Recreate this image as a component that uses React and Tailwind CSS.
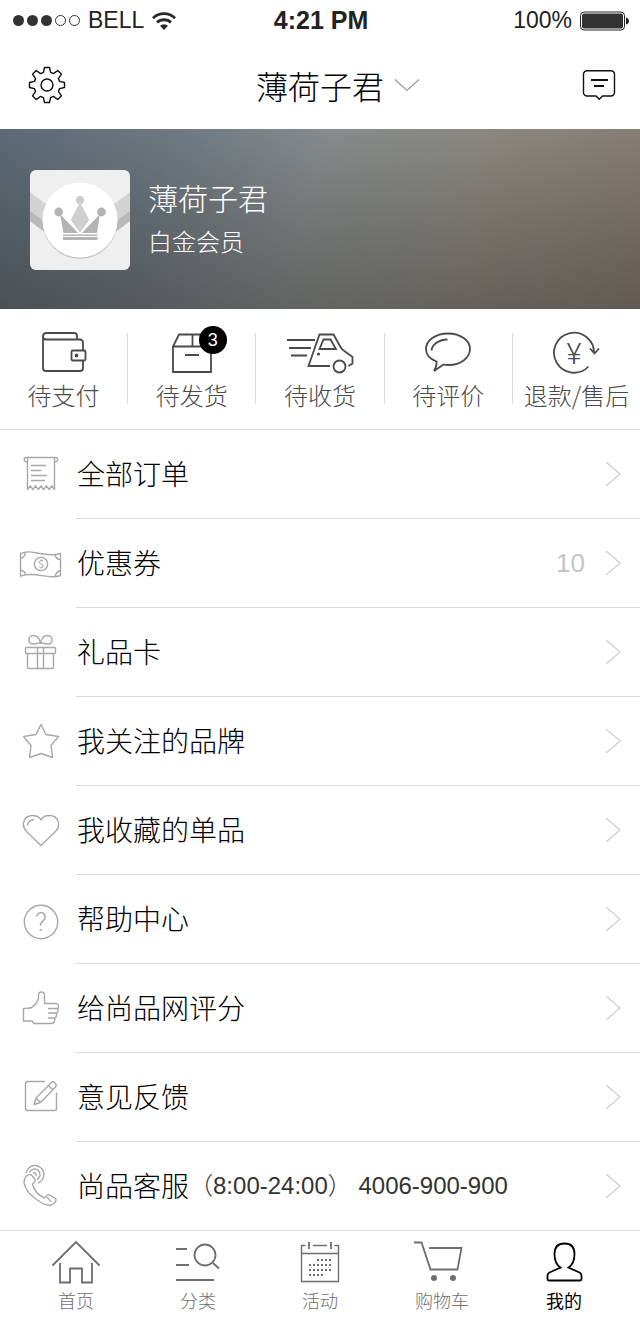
import { useState } from "react";

function StatusBar() {
  return (
    <div className="grid h-[41px] grid-cols-[1fr_auto_1fr] items-center pl-[13px] pr-[11px] font-['Liberation_Sans',sans-serif] text-[23px] text-[#222]">
      <div className="flex items-center">
        <div className="flex gap-[3px]">
          <span className="size-[11px] rounded-full bg-[#333]" />
          <span className="size-[11px] rounded-full bg-[#333]" />
          <span className="size-[11px] rounded-full bg-[#333]" />
          <span className="size-[11px] rounded-full border border-[#333]" />
          <span className="size-[11px] rounded-full border border-[#333]" />
        </div>
        <span className="ml-2">BELL</span>
        <svg viewBox="0 0 24 18" className="ml-2 h-[18px] w-6" fill="none" stroke="#2b2b2b" strokeWidth="2.8">
          <path d="M1 6.2A15.6 15.6 0 0 1 23 6.2" />
          <path d="M5 10.6a10 10 0 0 1 14 0" />
          <path d="M12 18l-4-4.2a6 6 0 0 1 8 0z" fill="#2b2b2b" stroke="none" />
        </svg>
      </div>
      <span className="text-[25px] font-bold">4:21 PM</span>
      <div className="flex items-center justify-end gap-2">
        <span>100%</span>
        <svg viewBox="0 0 49 20" className="h-5 w-[49px]">
          <rect x="0.5" y="1" width="44" height="18" rx="3.5" fill="none" stroke="#222" />
          <rect x="2" y="2.5" width="41" height="15" rx="2" fill="#333" />
          <path d="M46 6.5c4 1 4 6 0 7z" fill="#222" />
        </svg>
      </div>
    </div>
  );
}

function Header({ name }) {
  return (
    <header className="grid h-22 grid-cols-[1fr_auto_1fr] items-center px-6">
      <button aria-label="设置" className="ml-1 justify-self-start">
        <svg viewBox="-19 -19 38 38" className="size-[38px]" fill="none" stroke="#111" strokeWidth="1.4" strokeLinejoin="round">
          <path d="M-3.6-12.6-2.5-17.5H2.5L3.6-12.6 6.4-11.4 10.8-14.5 14.5-10.8 11.4-6.4 12.6-3.6 17.5-2.5V2.5L12.6 3.6 11.4 6.4 14.5 10.8 10.8 14.5 6.4 11.4 3.6 12.6 2.5 17.5H-2.5L-3.6 12.6-6.4 11.4-10.8 14.5-14.5 10.8-11.4 6.4-12.6 3.6-17.5 2.5V-2.5L-12.6-3.6-11.4-6.4-14.5-10.8-10.8-14.5-6.4-11.4Z" />
          <circle r="6" />
        </svg>
      </button>
      <button className="flex items-center gap-[10px] pl-9 text-[32px] leading-10 text-black">
        {name}
        <svg viewBox="0 0 26 14" className="h-[14px] w-[26px]" fill="none" stroke="#999" strokeWidth="1.2">
          <path d="M1 1.5l12 11 12-11" />
        </svg>
      </button>
      <button aria-label="消息" className="justify-self-end">
        <svg viewBox="0 0 34 32" className="h-8 w-[34px]" fill="none" stroke="#111" strokeWidth="1.4">
          <path d="M5 1.7h24a3.5 3.5 0 0 1 3.5 3.5v18.3A3.5 3.5 0 0 1 29 27h-8.5L17.3 30.3 14 27H5a3.5 3.5 0 0 1-3.5-3.5V5.2A3.5 3.5 0 0 1 5 1.7z" />
          <path d="M9 11h17M12 17h10" strokeWidth="1.8" />
        </svg>
      </button>
    </header>
  );
}

function Avatar() {
  return (
    <svg viewBox="0 0 100 100" className="size-[100px] rounded-md bg-[#efefef]">
      <path d="M0 22l17 13v18L0 41zM100 22L83 35v18l17-12z" fill="#d2d2d2" />
      <path d="M0 41l17 12v11L0 51zM100 41L83 53v11l17-13z" fill="#b9b9b9" />
      <circle cx="50" cy="51.5" r="37.3" fill="#c4c4c4" />
      <circle cx="50" cy="50" r="37.5" fill="#fff" />
      <circle cx="50" cy="30" r="4.2" fill="#cdcdcd" />
      <path d="M50 32l9.3 18L50 62.5 40.7 50z" fill="#d0d0d0" />
      <g fill="#b4b4b4">
        <circle cx="28.7" cy="42" r="4.4" />
        <circle cx="71.5" cy="42" r="4.4" />
        <path d="M30 44l18 19H33.5zM70 44L52 63h15z" />
        <path d="M33 64.5h34.5V66H33zM33 67h34.5v3H33z" />
      </g>
    </svg>
  );
}

function Profile({ name, level }) {
  return (
    <section className="flex h-45 bg-[linear-gradient(to_bottom,rgba(40,36,30,0)_0%,rgba(40,36,30,0.2)_50%,rgba(40,36,30,0.38)_100%),linear-gradient(100deg,#5c6a76_0%,#6d7882_25%,#858b8c_48%,#8a8880_72%,#857b74_100%)] pt-[41px] pl-[30px]">
      <Avatar />
      <div className="ml-[18px] pt-[7px] text-white">
        <h1 className="text-3xl leading-10">{name}</h1>
        <p className="text-2xl leading-12">{level}</p>
      </div>
    </section>
  );
}

const orders = [
  {
    label: "待支付",
    icon: (
      <>
        <path d="M13 6.5V38a3 3 0 0 0 3 3h34a3 3 0 0 0 3-3v-7.5M53 20.5v-8a3 3 0 0 0-3-3H16a3 3 0 0 1-3-3A3.5 3.5 0 0 1 16 3h28a3 3 0 0 1 3 3v3.5" />
        <rect x="41.5" y="20.5" width="14" height="10" rx="1.5" />
        <circle cx="46.5" cy="25.5" r="1" fill="currentColor" />
      </>
    ),
  },
  {
    label: "待发货",
    count: 3,
    icon: <path d="M15 16.5h38V42H15zL21 4.5h26l6 12M34.5 4.5v12M27 25h14" />,
  },
  {
    label: "待收货",
    icon: (
      <>
        <path d="M1 10h28M3 18h22M5 25.5h16" />
        <path d="M44 36H22.5l11-31.5h14l7 12.5q1.5 3 4.5 4.5l7.5 5.5v6.5L62.5 36" />
        <path d="M37.5 9.5h7L50 19H33.5z" />
        <circle cx="32.5" cy="24" r="0.7" fill="currentColor" />
        <circle cx="53.5" cy="36.5" r="6" />
      </>
    ),
  },
  {
    label: "待评价",
    icon: (
      <>
        <path d="M22.5 31.5C16 29 12 24.5 12 19 12 10.5 21.5 3.5 34 3.5S56 10.5 56 19 47 35 34.5 35c-2 0-3.5 0-5-.5L20 41q3-5.5 2.5-9.5z" />
        <path d="M17.5 20.5c.5-6 6.5-10.5 16-11" />
      </>
    ),
  },
  {
    label: "退款/售后",
    icon: (
      <>
        <path d="M46.5 36.5A20 20 0 1 1 52 23.5M48 18.5l4.5 5 4.5-5" />
        <text x="32" y="34" textAnchor="middle" fill="currentColor" stroke="none" fontSize="29" className="font-['Roboto',sans-serif]">
          ¥
        </text>
      </>
    ),
  },
];

function Orders() {
  return (
    <section className="flex border-b border-[#d9d9d9]">
      {orders.map((o, i) => (
        <div key={o.label} className="contents">
          {i > 0 && <span className="mt-6 h-[71px] w-px bg-[#d9d9d9]" />}
          <button className="flex flex-1 basis-0 flex-col items-center pt-[21px] pb-[17px] text-[#4a4a4a]">
            <span className="relative">
              <svg viewBox="0 0 68 48" className="h-12 w-[68px]" fill="none" stroke="currentColor" strokeWidth="1.8">
                {o.icon}
              </svg>
              {o.count && (
                <span className="absolute -top-1 left-[41px] flex size-7 items-center justify-center rounded-full bg-black font-['Liberation_Sans',sans-serif] text-lg font-normal text-white">
                  {o.count}
                </span>
              )}
            </span>
            <span className="text-2xl leading-[34px] whitespace-nowrap">{o.label}</span>
          </button>
        </div>
      ))}
    </section>
  );
}

const menu = [
  {
    label: "全部订单",
    icon: (
      <>
        <path d="M8.5 8.5A2.2 2.2 0 1 1 6.5 4.5h31a2.2 2.2 0 1 1-2 4M8.5 4.5v32l2.7-3.7 2.7 3.7 2.7-3.7 2.7 3.7 2.7-3.7 2.7 3.7 2.7-3.7 2.7 3.7 2.7-3.7 2.7 3.7v-32" />
        <path d="M12 12.5h15M12 17.5h10.5M12 22.5h16M12 27.5h14" />
      </>
    ),
  },
  {
    label: "优惠券",
    value: 10,
    icon: (
      <>
        <path d="M1.5 11.5C14 6 24 16.5 41.5 11.5V33.5C28 38.5 18 28.5 1.5 34z" />
        <path d="M1.5 16.5q4.5-1 5-6.5M41.5 17.5q-4.5 0-5.5-5M1.5 28.5q4.5 0 5 4.2M41.5 28.5q-4.5 1-5.5 6.5" />
        <circle cx="22" cy="22" r="6.6" />
        <text x="22" y="26" textAnchor="middle" fill="currentColor" stroke="none" fontSize="11" fontWeight="400">
          $
        </text>
      </>
    ),
  },
  {
    label: "礼品卡",
    icon: (
      <>
        <rect x="6.5" y="16.5" width="30" height="6" rx="1" />
        <path d="M8.5 22.5V36a1.5 1.5 0 0 0 1.5 1.5h23a1.5 1.5 0 0 0 1.5-1.5V22.5M18.5 16.5v21M24.5 16.5v21" />
        <path d="M21.5 12C20 6 17 4.5 14.5 4.5 11 4.5 9.5 7 10 10c.5 2.5 3 3.5 5 3 2.5-.5 5-1 6.5-1zM21.5 12C23 6 26 4.5 28.5 4.5 32 4.5 33.5 7 33 10c-.5 2.5-3 3.5-5 3-2.5-.5-5-1-6.5-1z" />
      </>
    ),
  },
  {
    label: "我关注的品牌",
    icon: <path d="M22 4.5l5 10 12.5 2-7.5 9 1.5 12L22 33.5 10.5 37.5 12 25.5l-7.5-9 12.5-2z" />,
  },
  {
    label: "我收藏的单品",
    icon: (
      <>
        <path d="M22 36.5L8 23C1 16 5 6.5 13.5 6.5c4 0 7 1.5 8.5 4.5 1.5-3 4.5-4.5 8.5-4.5C39 6.5 43 16 36 23z" />
        <path d="M8.5 16.5c0-3.5 3-6 6.5-6" />
      </>
    ),
  },
  {
    label: "帮助中心",
    icon: (
      <>
        <circle cx="22" cy="24" r="16.7" />
        <text x="22" y="33" textAnchor="middle" fill="currentColor" stroke="none" fontSize="26" className="font-['Roboto',sans-serif]">
          ?
        </text>
      </>
    ),
  },
  {
    label: "给尚品网评分",
    icon: (
      <path d="M4.5 21.5V34h8.5l2 2.5h17.5c2 0 3-1 3-2.7l.5-2.8q1.5-1 1.5-2.5V26q1.5-1 1.5-2.3v-2.2q.7-1 .5-2.5c-.2-1.7-1-2.3-2.5-2.5H25.5v-8c0-2.5-1-3.5-3-3.5s-3 1-3 3v3c-1 4-3.5 7.5-7 9.5-2 1-4 .8-8 1zM29 21.5h9.5M29 26h8.5M29 31h7.5" />
    ),
  },
  {
    label: "意见反馈",
    icon: (
      <>
        <path d="M26 5.5H8.5a2 2 0 0 0-2 2v25a2 2 0 0 0 2 2h27a2 2 0 0 0 2-2v-16" />
        <path d="M15 28.5l2-6.5L32.5 6.5q1.5-1.5 3.5.5t.5 4L21.5 26.5zM17 22l4.5 4.5M29.5 9.5l4.5 4.5" />
      </>
    ),
  },
  {
    label: "尚品客服",
    note: "（8:00-24:00） 4006-900-900",
    icon: (
      <>
        <path d="M7 12.5c2-2 4.5-2.5 6-1l3 4c1 2-.5 3-2.5 4.5 1.5 6 6.5 11.5 12 14 2-3 4-4 5.5-3l5.5 3.5c1.5 1.5 0 3.5-2 5.5-3 2-7 1.5-11.5-1C13.5 33.5 6 26 5 18.5c0-2.5.5-4.5 2-6zM27.5 33q2.5 1.5 4.5 5" />
        <path d="M7 9.5a9 9 0 1 1 12 9.5M10.5 8.5a5.5 5.5 0 1 1 7.5 7M14 9a2.3 2.3 0 0 1 3 3" />
      </>
    ),
  },
];

function MenuRow({ item }) {
  return (
    <li className="group">
      <a href="#" className="flex items-center pl-[19px]">
        <svg viewBox="0 0 44 44" className="size-11 text-[#a8a8a8]" fill="none" stroke="currentColor" strokeWidth="1.4" strokeLinejoin="round">
          {item.icon}
        </svg>
        <div className="ml-[13px] box-content flex h-22 flex-1 items-center border-b border-[#d9d9d9] pr-[19px] pl-px group-last:border-b-0">
          <span className="pb-[3px] text-[28px] text-black">{item.label}</span>
          {item.note && (
            <span className="font-['Liberation_Sans','Noto_Sans_CJK_SC',sans-serif] text-2xl text-[#333]">
              {item.note}
            </span>
          )}
          <span className="ml-auto font-['Liberation_Sans',sans-serif] text-[26px] text-[#c4c4c4]">
            {item.value}
          </span>
          <svg viewBox="0 0 16 26" className="ml-5 h-[26px] w-4" fill="none" stroke="#d0d0d0" strokeWidth="1.4">
            <path d="M1 1l14 12L1 25" />
          </svg>
        </div>
      </a>
    </li>
  );
}

const tabs = [
  {
    label: "首页",
    icon: <path d="M1.5 25.5L25 2l23.5 23.5M9 23v19.5h10v-14h12v14h10V23" />,
  },
  {
    label: "分类",
    icon: (
      <>
        <path d="M3 9h11M3 25h13M3 40h38M40 23l6 5.5" />
        <circle cx="32" cy="15" r="10.5" />
      </>
    ),
  },
  {
    label: "活动",
    icon: (
      <>
        <path d="M10.5 5.5h-4v36h37v-36h-4M18 5.5h14M6.5 13.5h37" strokeWidth="1.4" />
        <path d="M14 2v7M36 2v7" />
        <path d="M22 20h14M14 25h22M14 30h22M14 35h14" strokeDasharray="2 2" />
      </>
    ),
  },
  {
    label: "购物车",
    icon: (
      <>
        <path d="M-3 2.5h7.5l9 27h27L44.5 8H12" />
        <circle cx="17" cy="38" r="3" fill="currentColor" stroke="none" />
        <circle cx="36" cy="38" r="3" fill="currentColor" stroke="none" />
      </>
    ),
  },
  {
    label: "我的",
    icon: (
      <path d="M21.5 27.5C17.5 25 15.5 20.5 15.5 14c0-7 4-10.5 10-10.5s10 3.5 10 10.5c0 6.5-2 11-6 13.5l11 5q2 1 2 3V39q0 1.5-1.5 1.5H10Q8.5 40.5 8.5 39v-3.5q0-2 2-3z" />
    ),
  },
];

function TabBar() {
  const [active, setActive] = useState("我的");

  return (
    <nav className="flex border-t border-[#d9d9d9] px-[15px] pt-[9px] pb-[5px]">
      {tabs.map((t) => (
        <button
          key={t.label}
          onClick={() => setActive(t.label)}
          className={`flex flex-1 flex-col items-center ${
            active === t.label ? "font-normal text-black" : "text-[#6e6e6e]"
          }`}
        >
          <svg viewBox="-3 0 56 44" className="h-11 w-14" fill="none" stroke="currentColor" strokeWidth="1.8">
            {t.icon}
          </svg>
          <span className="text-lg leading-8">{t.label}</span>
        </button>
      ))}
    </nav>
  );
}

export default function App() {
  return (
    <div className="bg-white font-['Noto_Sans_CJK_SC',sans-serif] font-light">
      <StatusBar />
      <Header name="薄荷子君" />
      <Profile name="薄荷子君" level="白金会员" />
      <Orders />
      <ul>
        {menu.map((item) => (
          <MenuRow key={item.label} item={item} />
        ))}
      </ul>
      <TabBar />
    </div>
  );
}
